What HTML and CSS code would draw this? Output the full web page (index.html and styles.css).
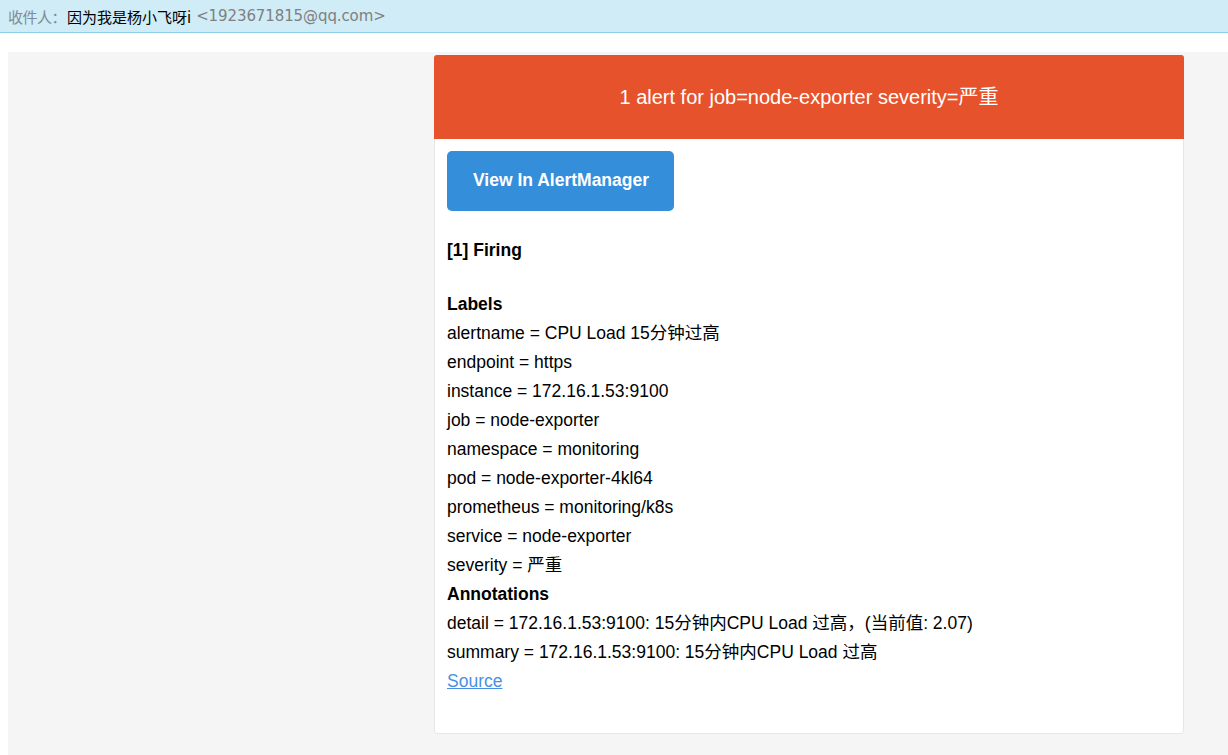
FILE: index.html
```html
<!DOCTYPE html>
<html>
<head>
<meta charset="utf-8">
<title>Alert</title>
<link rel="stylesheet" href="styles.css">
</head>
<body>
<div class="topbar">
  <span class="to-label">收件人：</span><span class="to-name">因为我是杨小飞呀i</span><span class="to-mail">&lt;1923671815@qq.com&gt;</span>
</div>
<div class="page">
  <div class="gray">
    <div class="card">
      <div class="alert">1 alert for job=node-exporter severity=严重</div>
      <div class="wrap">
        <div class="block"><a class="btn" href="#">View In AlertManager</a></div>
        <div class="block"><strong>[1] Firing</strong></div>
        <div class="block">
          <strong>Labels</strong><br>
          alertname = CPU Load 15分钟过高<br>
          endpoint = https<br>
          instance = 172.16.1.53:9100<br>
          job = node-exporter<br>
          namespace = monitoring<br>
          pod = node-exporter-4kl64<br>
          prometheus = monitoring/k8s<br>
          service = node-exporter<br>
          severity = 严重<br>
          <strong>Annotations</strong><br>
          detail = 172.16.1.53:9100: 15分钟内CPU Load 过高，(当前值: 2.07)<br>
          summary = 172.16.1.53:9100: 15分钟内CPU Load 过高<br>
          <a class="src" href="#">Source</a><br>
        </div>
      </div>
    </div>
  </div>
</div>
</body>
</html>
```

FILE: styles.css
```css
html, body {
  margin: 0;
  padding: 0;
  background: #ffffff;
}
body {
  overflow: hidden;
}
.topbar {
  height: 32px;
  background: #cfecf7;
  border-bottom: 1px solid #8dcfe6;
  box-sizing: content-box;
  display: flex;
  align-items: center;
  padding-left: 8px;
  font-family: "DejaVu Sans", "Noto Sans CJK SC", sans-serif;
  font-size: 15px;
  white-space: nowrap;
}
.to-label {
  color: #7f8b96;
  font-family: "Noto Sans CJK SC", sans-serif;
  letter-spacing: -0.5px;
}
.to-name {
  color: #000000;
  font-family: "Noto Sans CJK SC", sans-serif;
  margin-left: 1px;
  margin-right: 5px;
}
.to-mail {
  color: #808080;
  letter-spacing: -0.1px;
}
.page {
  padding: 19px 0 0 8px;
}
.gray {
  background: #f5f5f5;
  padding: 3px 0 40px 426px;
}
.card {
  width: 748px;
  background: #ffffff;
  border: 1px solid #e6e6e6;
  border-radius: 3px;
  font-family: "Liberation Sans", Arial, "Noto Sans CJK SC", sans-serif;
  font-size: 17.5px;
  line-height: 29px;
  color: #000000;
}
.alert {
  background: #e6522c;
  color: #ffffff;
  font-size: 20px;
  line-height: 32px;
  padding: 26px 25px 26px;
  text-align: center;
  border-radius: 3px 3px 0 0;
  margin: -1px -1px 0;
}
.wrap {
  padding: 12px 12px 12px 12px;
}
.block {
  padding-bottom: 25px;
}
.btn {
  display: inline-block;
  background: #348eda;
  color: #ffffff;
  font-weight: bold;
  text-decoration: none;
  line-height: 35px;
  padding: 12px 25px 13px 26px;
  border-radius: 5px;
  vertical-align: top;
}
.src {
  color: #4a90e2;
  text-decoration: underline;
}
```
